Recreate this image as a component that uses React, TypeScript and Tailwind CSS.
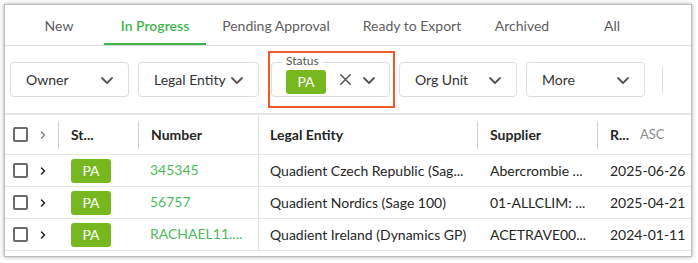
import React from 'react';

const tabs = [
  { label: 'New', w: 'w-[90px]' },
  { label: 'In Progress', w: 'w-[102px]', active: true },
  { label: 'Pending Approval', w: 'w-[140px]' },
  { label: 'Ready to Export', w: 'w-[132px]' },
  { label: 'Archived', w: 'w-[88px]' },
  { label: 'All', w: 'w-[92px]' },
];

const rows = [
  { number: '345345', entity: 'Quadient Czech Republic (Sag...', supplier: 'Abercrombie ...', date: '2025-06-26' },
  { number: '56757', entity: 'Quadient Nordics (Sage 100)', supplier: '01-ALLCLIM: ...', date: '2025-04-21' },
  { number: 'RACHAEL11....', entity: 'Quadient Ireland (Dynamics GP)', supplier: 'ACETRAVE00...', date: '2024-01-11' },
];

function Chevron({ className = '' }: { className?: string }) {
  return (
    <svg viewBox="0 0 16 16" className={className} fill="none" stroke="currentColor" strokeWidth="1.8" strokeLinecap="round" strokeLinejoin="round">
      <path d="M3 6l5 5 5-5" />
    </svg>
  );
}

function ChevronRight({ className = '' }: { className?: string }) {
  return (
    <svg viewBox="0 0 16 16" className={className} fill="none" stroke="currentColor" strokeWidth="2" strokeLinecap="round" strokeLinejoin="round">
      <path d="M6 4l4 4-4 4" />
    </svg>
  );
}

function FilterButton({ label, w }: { label: string; w: string }) {
  return (
    <div className={`${w} h-[35px] flex items-center justify-between pl-[15px] pr-[13px] border border-[#dedede] rounded-[4px] bg-white`}>
      <span className="text-[14px] text-[#333] whitespace-nowrap">{label}</span>
      <Chevron className="w-[16px] h-[16px] text-[#555]" />
    </div>
  );
}

function Checkbox() {
  return <div className="w-[15px] h-[15px] border-2 border-[#6b6b6b] rounded-[2px] bg-white" />;
}

function Badge() {
  return (
    <div className="w-[40px] h-[24px] rounded-[3px] bg-[#77b71f] text-white text-[14px] flex items-center justify-center">PA</div>
  );
}

export default function App() {
  return (
    <div className="w-[698px] h-[263px] bg-white pl-[4px] pt-[4px] overflow-hidden" style={{ fontFamily: 'Lato, "Noto Sans", sans-serif' }}>
      <div className="w-[688px] h-[253px] bg-white border border-[#bdbdbd] shadow-[0_0_4px_rgba(0,0,0,0.35)] flex flex-col">
        {/* Tabs */}
        <div className="h-[41px] shrink-0 flex border-b border-[#dcdcdc] pl-[9px]">
          {tabs.map((t) => (
            <div
              key={t.label}
              className={`${t.w} flex items-center justify-center text-[14px] border-b-2 pt-[2px] ${
                t.active ? 'border-[#3cb54a] text-[#3cb54a] font-semibold' : 'border-transparent text-[#5e5e5e]'
              }`}
            >
              {t.label}
            </div>
          ))}
        </div>

        {/* Filters */}
        <div className="h-[69px] shrink-0 flex items-center pl-[5px] border-b-2 border-[#e6e6e6]">
          <FilterButton label="Owner" w="w-[119px]" />
          <div className="ml-[9px]">
            <FilterButton label="Legal Entity" w="w-[121px]" />
          </div>
          <div className="ml-[9px] w-[127px] h-[57px] border-2 border-[#f2592a] flex items-center pl-[1px]">
            <div className="relative w-[119px] h-[35px] border border-[#dedede] rounded-[4px] flex items-center pl-[14px] pr-[12px]">
              <span className="absolute -top-[10px] left-[10px] bg-white px-[4px] text-[12px] leading-[16px] text-[#555]">Status</span>
              <div className="mt-[4px]"><Badge /></div>
              <svg viewBox="0 0 16 16" className="ml-[12px] w-[15px] h-[15px] text-[#555]" fill="none" stroke="currentColor" strokeWidth="1.6" strokeLinecap="round">
                <path d="M3 3l10 10M13 3L3 13" />
              </svg>
              <Chevron className="ml-[8px] w-[16px] h-[16px] text-[#555]" />
            </div>
          </div>
          <div className="ml-[4px]">
            <FilterButton label="Org Unit" w="w-[118px]" />
          </div>
          <div className="ml-[9px]">
            <FilterButton label="More" w="w-[119px]" />
          </div>
          <div className="ml-[17px] w-px h-[26px] bg-[#dcdcdc]" />
        </div>

        {/* Table */}
        <div className="flex flex-col text-[14px]">
          <div className="h-[40px] flex items-center border-b border-[#e6e6e6] font-bold text-[#262626]">
            <div className="w-[28px] pl-[8px]"><Checkbox /></div>
            <div className="w-[20px] flex justify-center"><ChevronRight className="w-[12px] h-[12px] text-[#888]" /></div>
            <div className="w-[5px]" />
            <div className="w-px h-[28px] bg-[#cfcfcf]" />
            <div className="w-[79px] pl-[12px]">St...</div>
            <div className="w-px h-[28px] bg-[#cfcfcf]" />
            <div className="w-[119px] pl-[12px]">Number</div>
            <div className="w-px self-stretch bg-[#e3e3e3]" />
            <div className="w-[218px] pl-[11px]">Legal Entity</div>
            <div className="w-px h-[28px] bg-[#cfcfcf]" />
            <div className="w-[119px] pl-[12px]">Supplier</div>
            <div className="w-px h-[28px] bg-[#cfcfcf]" />
            <div className="flex-1 pl-[12px] flex items-center">
              <span>R...</span>
              <span className="ml-[11px] text-[13px] font-normal text-[#8a8a8a]">ASC</span>
            </div>
          </div>
          {rows.map((r) => (
            <div key={r.number} className="h-[32px] flex items-center border-b border-[#e6e6e6] text-[#262626]">
              <div className="w-[28px] pl-[8px]"><Checkbox /></div>
              <div className="w-[20px] flex justify-center"><ChevronRight className="w-[12px] h-[12px] text-[#222]" /></div>
              <div className="w-[5px]" />
              <div className="w-px" />
              <div className="w-[79px] pl-[12px]"><Badge /></div>
              <div className="w-px" />
              <div className="w-[119px] pl-[11px] text-[#4cbb5c] -mt-[3px]">{r.number}</div>
              <div className="w-px self-stretch bg-[#e3e3e3]" />
              <div className="w-[218px] pl-[11px] whitespace-nowrap overflow-hidden">{r.entity}</div>
              <div className="w-px" />
              <div className="w-[119px] pl-[12px] whitespace-nowrap overflow-hidden">{r.supplier}</div>
              <div className="w-px" />
              <div className="flex-1 pl-[12px]">{r.date}</div>
            </div>
          ))}
        </div>
      </div>
    </div>
  );
}
